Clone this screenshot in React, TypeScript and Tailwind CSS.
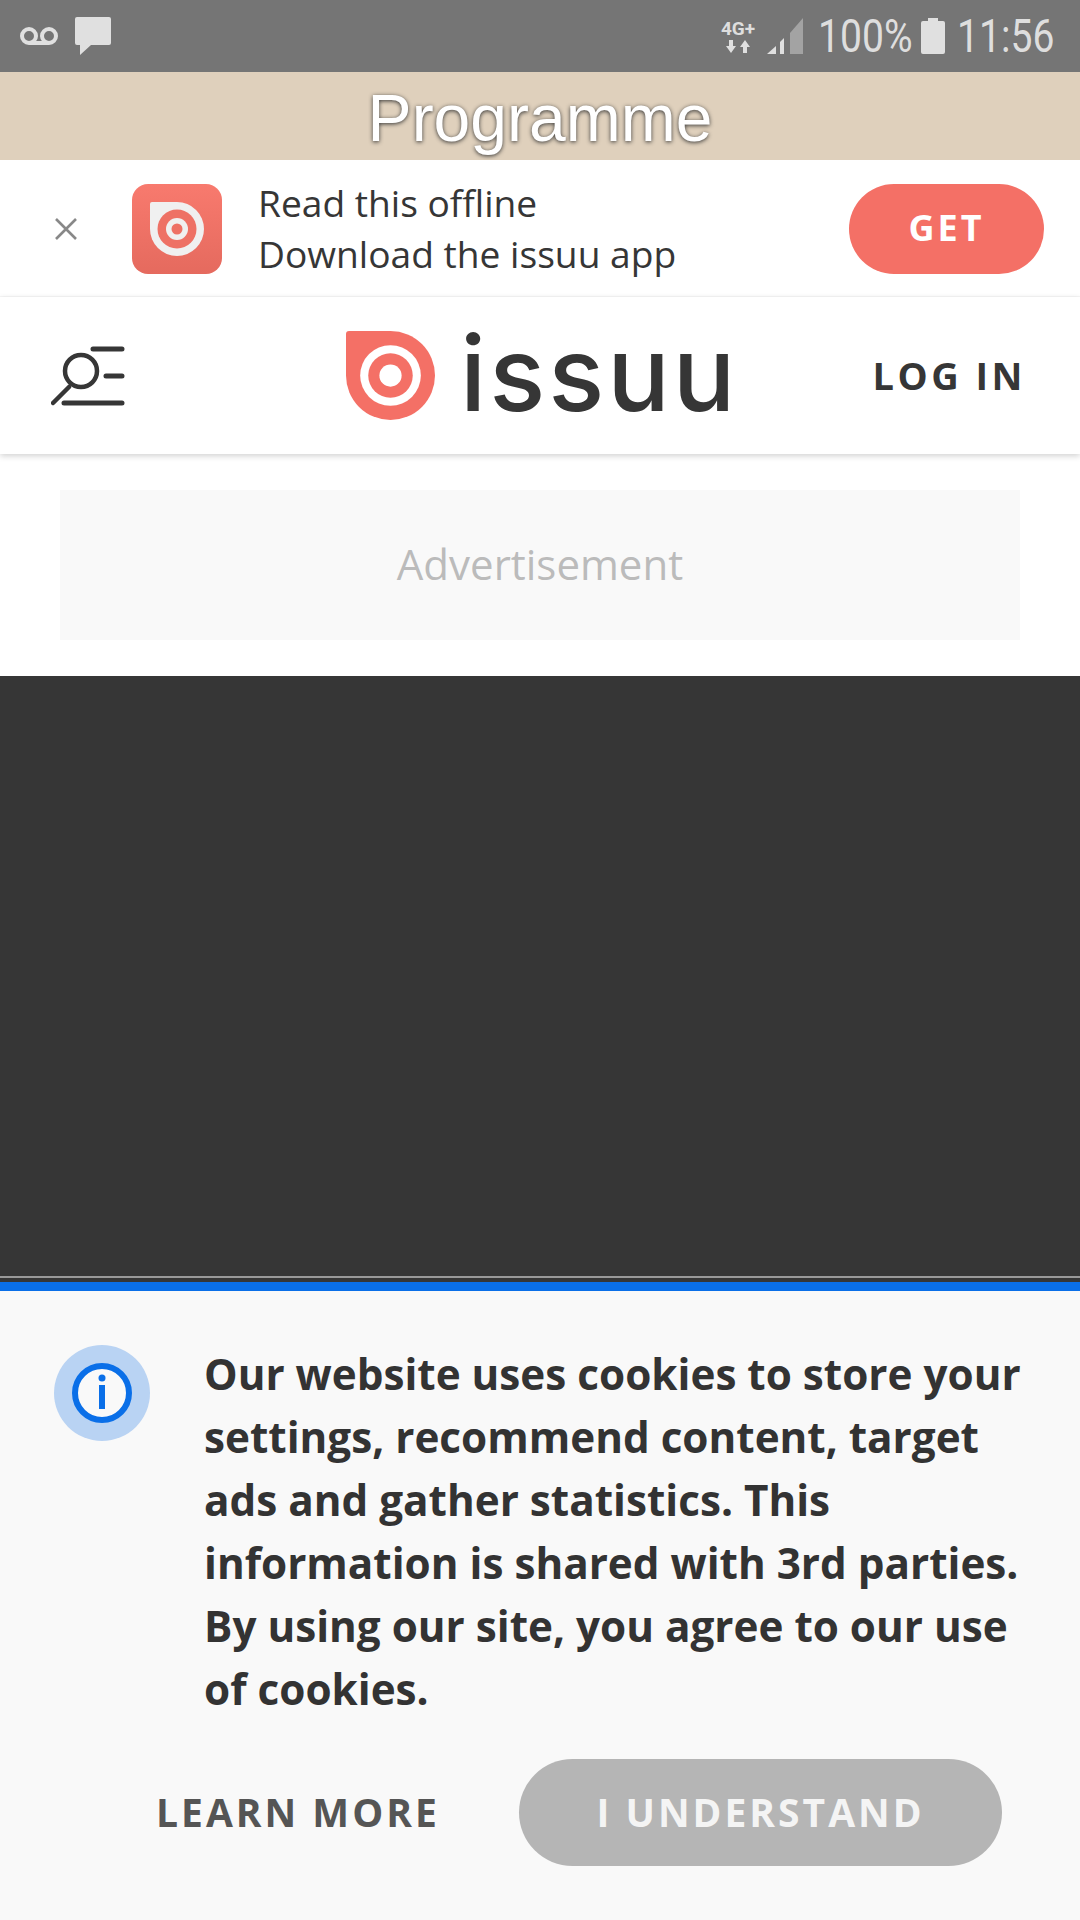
const sans = "font-['Open_Sans',sans-serif]";

function StatusBar() {
  return (
    <div className="flex h-[72px] items-center justify-between bg-[#757575] pl-[20px] pr-[25px] text-[#dedede]">
      <div className="flex items-center gap-[17px]">
        <svg width="38" height="18" viewBox="0 0 38 18" fill="none" stroke="#e0e0e0" strokeWidth="4">
          <circle cx="9" cy="9" r="7" />
          <circle cx="29" cy="9" r="7" />
          <path d="M9 16h20" />
        </svg>
        <svg width="36" height="38" viewBox="0 0 36 38" fill="#e0e0e0">
          <path d="M2 0h32a2 2 0 0 1 2 2v24a2 2 0 0 1-2 2H16L5 38v-10H2a2 2 0 0 1-2-2V2a2 2 0 0 1 2-2z" />
        </svg>
      </div>
      <div className="flex items-center font-['Roboto',sans-serif]">
        <div className="flex w-[38px] flex-col items-center">
          <span className="whitespace-nowrap text-[19px] font-bold leading-[20px]">4G+</span>
          <svg className="mt-[1px]" width="24" height="13" viewBox="0 0 24 13" fill="#e0e0e0">
            <path d="M3 0h4v6h3l-5 7-5-7h3zM17 13h4V7h3l-5-7-5 7h3z" />
          </svg>
        </div>
        <svg className="ml-[10px]" width="37" height="36" viewBox="0 0 37 36">
          <path d="M36 0v36H23V15z" fill="#a3a3a3" />
          <path d="M0 36l9-8v8zM13 24l4-4v16h-4z" fill="#e0e0e0" />
        </svg>
        <span className="ml-[14px] w-[92px] origin-left scale-x-[.85] whitespace-nowrap text-[46px] leading-none">100%</span>
        <svg className="ml-[11px]" width="24" height="36" viewBox="0 0 24 36" fill="#e0e0e0">
          <path d="M7 0h10v3h5a2 2 0 0 1 2 2v29a2 2 0 0 1-2 2H2a2 2 0 0 1-2-2V5a2 2 0 0 1 2-2h5z" />
        </svg>
        <span className="ml-[12px] w-[98px] origin-left scale-x-[.85] whitespace-nowrap text-[46px] leading-none">11:56</span>
      </div>
    </div>
  );
}

function AppBanner() {
  return (
    <div className={`flex h-[137px] items-center border-b border-[#f7f7f7] bg-white pl-[55px] pr-[36px] ${sans}`}>
      <svg className="mt-[1px]" width="22" height="22" viewBox="0 0 22 22" stroke="#888888" strokeWidth="2.6">
        <path d="M1 1l20 20M21 1L1 21" />
      </svg>
      <div className="ml-[55px] mt-[1px] flex h-[90px] w-[90px] items-center justify-center rounded-[16px] bg-gradient-to-b from-[#f87a6e] to-[#e56a5e]">
        <svg width="54" height="54" viewBox="0 0 54 54">
          <path d="M0 2a2 2 0 0 1 2-2h25a27 27 0 1 1-27 27z" fill="#f0f0f0" />
          <circle cx="27" cy="27" r="19.5" fill="#ee7165" />
          <circle cx="27" cy="27" r="11" fill="#f0f0f0" />
          <circle cx="27" cy="27" r="5.5" fill="#ee7165" />
        </svg>
      </div>
      <div className="ml-[36px] flex-1 text-[37.15px] leading-[51px] text-[#363636]">
        <p>Read this offline</p>
        <p>Download the issuu app</p>
      </div>
      <div className="mt-[1px] flex h-[90px] w-[195px] items-center justify-center rounded-full bg-[#f47066] pb-[2px] text-[36px] font-bold tracking-[3px] text-white">
        GET
      </div>
    </div>
  );
}

function Header() {
  return (
    <div className={`relative flex h-[157px] items-center bg-white pl-[51px] pr-[54px] shadow-[0_2px_6px_rgba(0,0,0,0.18)] ${sans}`}>
      <svg width="78" height="62" viewBox="0 0 78 62" fill="none" stroke="#363636" strokeLinecap="round">
        <circle cx="30" cy="26" r="16" strokeWidth="4.5" />
        <path d="M2 58l16-16" strokeWidth="4.5" />
        <path d="M42 4h29M55 31h16M13 58h58" strokeWidth="5" />
      </svg>
      <div className="ml-[217px] flex items-center">
        <svg width="89" height="89" viewBox="0 0 88 88">
          <path d="M0 3a3 3 0 0 1 3-3h41a44 44 0 1 1-44 44z" fill="#f47066" />
          <circle cx="44" cy="44" r="30" fill="#ffffff" />
          <circle cx="44" cy="44" r="22" fill="#f47066" />
          <circle cx="44" cy="44" r="11" fill="#ffffff" />
        </svg>
        <span className="ml-[25px] pb-[6px] font-['Inter',sans-serif] text-[104px] font-medium leading-none tracking-[3px] text-[#363636]">issuu</span>
      </div>
      <span className="ml-auto text-[38px] font-bold tracking-[3.5px] text-[#363636]">LOG IN</span>
    </div>
  );
}

function CookiePanel() {
  return (
    <div className={`flex-1 border-t-[9px] border-[#0a6fe8] bg-[#f9f9f9] ${sans}`}>
      <div className="flex pl-[54px] pr-[40px] pt-[51px]">
        <div className="mt-[3px] flex h-[96px] w-[96px] shrink-0 items-center justify-center rounded-full bg-[#b9d3f3]">
          <svg width="60" height="60" viewBox="0 0 60 60">
            <circle cx="30" cy="30" r="27" fill="#f9f9f9" stroke="#0a6fe8" strokeWidth="6" />
            <circle cx="30" cy="15" r="3.5" fill="#0a6fe8" />
            <rect x="27" y="22" width="6" height="24" fill="#0a6fe8" />
          </svg>
        </div>
        <p className="ml-[54px] text-[42.25px] font-bold leading-[63px] text-[#333333]">
          Our website uses cookies to store your settings, recommend content, target ads and gather statistics. This information is shared with 3rd parties. By using our site, you agree to our use of cookies.
        </p>
      </div>
      <div className="mt-[39px] flex items-center pl-[156px]">
        <span className="w-[363px] text-[39px] font-bold tracking-[3px] text-[#555555]">LEARN MORE</span>
        <div className="flex h-[107px] w-[483px] items-center justify-center rounded-full bg-[#b5b5b5] text-[39px] font-bold tracking-[3px] text-[#f4f4f4]">
          I UNDERSTAND
        </div>
      </div>
    </div>
  );
}

export default function App() {
  return (
    <div className="flex h-[1920px] w-[1080px] flex-col overflow-hidden bg-white">
      <StatusBar />
      <div className="flex h-[88px] items-center justify-center bg-[#dfd0bc] pt-[5px] font-['Liberation_Sans',sans-serif] text-[66px] text-white [text-shadow:0_1px_4px_#333333]">
        Programme
      </div>
      <AppBanner />
      <Header />
      <div className={`px-[60px] py-[36px] ${sans}`}>
        <div className="flex h-[150px] items-center justify-center bg-[#f9f9f9] pb-[3px] text-[42px] text-[#bbbbbb]">
          Advertisement
        </div>
      </div>
      <div className="flex h-[606px] flex-col justify-end bg-[#363636]">
        <div className="mb-[4px] h-[2px] bg-[#999999]" />
      </div>
      <CookiePanel />
    </div>
  );
}
